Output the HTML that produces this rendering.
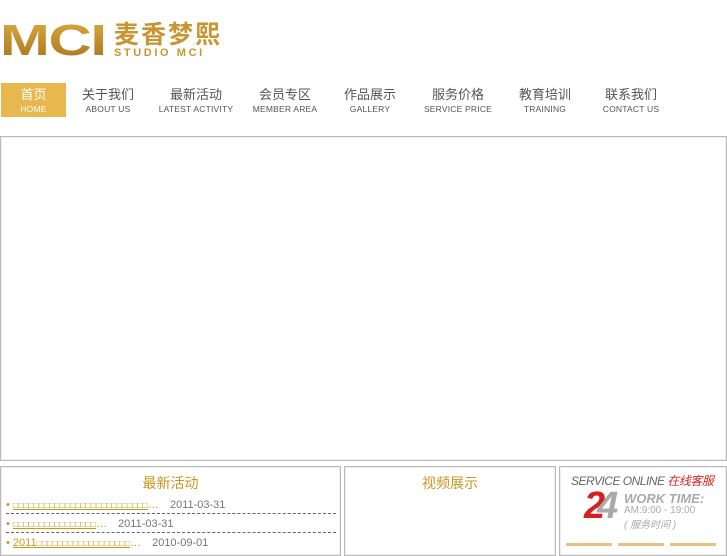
<!DOCTYPE html>
<html><head><meta charset="utf-8"><style>
*{margin:0;padding:0;box-sizing:border-box}
body{width:727px;height:545px;overflow:hidden;background:#fff;font-family:"Liberation Sans","Noto Sans CJK SC",sans-serif;position:relative}
.a{position:absolute}
.nav{top:83px;height:34px;text-align:center;color:#555}
.nav .c{font-size:13px;line-height:16px;margin-top:4px}
.nav .e{font-size:8.5px;line-height:12px;letter-spacing:.2px}
.box{border:1px solid #bbb;box-shadow:inset 0 0 0 1px #eee}
.li{left:6px;font-size:11px;color:#c8961e;white-space:nowrap}
.li u{text-decoration:underline;font-size:8.6px}
.li i{font-style:normal;color:#777;margin-left:8px}
.dash{left:6px;width:330px;border-top:1px dashed #666}
</style></head><body>
<div class="a" style="left:0;top:19px;font-size:44px;line-height:44px;letter-spacing:-1px;transform:scaleX(1.36);transform-origin:left;background:linear-gradient(#d9aa40,#a8741c);-webkit-background-clip:text;color:transparent;font-weight:bold">MCI</div>
<div class="a" style="left:114px;top:18px;font-size:25px;font-weight:bold;color:#c89530;line-height:30px;letter-spacing:2px;font-family:'Noto Sans CJK SC',sans-serif">麦香梦熙</div>
<div class="a" style="left:114px;top:47px;font-size:11px;font-weight:bold;color:#c89530;letter-spacing:2.6px">STUDIO MCI</div>
<div class="a" style="left:1px;top:83px;width:65px;height:34px;background:#e8b84f"></div>
<div class="a nav" style="left:1px;width:65px;color:#fff"><div class="c">首页</div><div class="e">HOME</div></div>
<div class="a nav" style="left:68px;width:80px"><div class="c">关于我们</div><div class="e">ABOUT US</div></div>
<div class="a nav" style="left:151px;width:90px"><div class="c">最新活动</div><div class="e">LATEST ACTIVITY</div></div>
<div class="a nav" style="left:245px;width:80px"><div class="c">会员专区</div><div class="e">MEMBER AREA</div></div>
<div class="a nav" style="left:330px;width:80px"><div class="c">作品展示</div><div class="e">GALLERY</div></div>
<div class="a nav" style="left:418px;width:80px"><div class="c">服务价格</div><div class="e">SERVICE PRICE</div></div>
<div class="a nav" style="left:505px;width:80px"><div class="c">教育培训</div><div class="e">TRAINING</div></div>
<div class="a nav" style="left:591px;width:80px"><div class="c">联系我们</div><div class="e">CONTACT US</div></div>
<div class="a box" style="left:0;top:136px;width:727px;height:325px"></div>
<div class="a box" style="left:0;top:466px;width:341px;height:90px"></div>
<div class="a box" style="left:344px;top:466px;width:212px;height:90px"></div>
<div class="a box" style="left:559px;top:466px;width:168px;height:90px"></div>
<div class="a" style="left:0;width:341px;top:473px;text-align:center;font-size:14px;color:#c8961e">最新活动</div>
<div class="a" style="left:344px;width:212px;top:473px;text-align:center;font-size:14px;color:#c8961e">视频展示</div>
<div class="a li" style="top:499px">•&nbsp;<u>□□□□□□□□□□□□□□□□□□□□□□□□□□</u>… <i>2011-03-31</i></div>
<div class="a dash" style="top:513px"></div>
<div class="a li" style="top:518px">•&nbsp;<u>□□□□□□□□□□□□□□□□</u>… <i>2011-03-31</i></div>
<div class="a dash" style="top:532px"></div>
<div class="a li" style="top:537px">•&nbsp;<u><span style="font-size:11px">2011</span>□□□□□□□□□□□□□□□□□□</u>… <i>2010-09-01</i></div>
<div class="a" style="left:571px;top:472px;font-size:12px;color:#666;font-style:italic;letter-spacing:-.5px;white-space:nowrap">SERVICE ONLINE <span style="color:#d22">在线客服</span></div>
<div class="a" style="left:584px;top:486px;font-size:38px;font-weight:bold;font-style:italic;line-height:40px;letter-spacing:-8px"><span style="color:#d42020">2</span><span style="color:#aaa">4</span></div>
<div class="a" style="left:624px;top:491px;font-size:13px;font-weight:bold;font-style:italic;color:#aaa">WORK TIME:</div>
<div class="a" style="left:624px;top:505px;font-size:10px;color:#aaa">AM:9:00 - 19:00</div>
<div class="a" style="left:624px;top:516px;font-size:10px;color:#aaa;font-style:italic">( 服务时间 )</div>
<div class="a" style="left:566px;top:543px;width:46px;height:3px;background:#e8c080"></div>
<div class="a" style="left:618px;top:543px;width:46px;height:3px;background:#e8c080"></div>
<div class="a" style="left:670px;top:543px;width:46px;height:3px;background:#e8c080"></div>
</body></html>
